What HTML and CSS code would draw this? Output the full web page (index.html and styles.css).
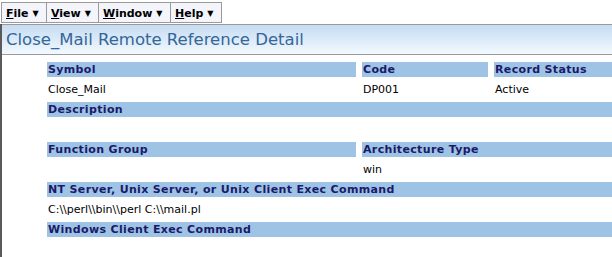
FILE: index.html
```html
<!DOCTYPE html>
<html lang="en">
<head>
    <meta charset="UTF-8">
    <title>Close_Mail Remote Reference Detail</title>
    <link rel="stylesheet" href="styles.css">
</head>
<body>
    <div class="menubar">
        <span class="menu menu-file"><span><u>F</u>ile</span><span class="arrow">&#9660;</span></span>
        <span class="menu menu-view"><span><u>V</u>iew</span><span class="arrow">&#9660;</span></span>
        <span class="menu menu-window"><span><u>W</u>indow</span><span class="arrow">&#9660;</span></span>
        <span class="menu menu-help"><span><u>H</u>elp</span><span class="arrow">&#9660;</span></span>
    </div>
    <div class="page">
        <h1 class="title">Close_Mail Remote Reference Detail</h1>
        <div class="detail">
            <div class="hd">Symbol</div>
            <div class="hd">Code</div>
            <div class="hd">Record Status</div>
            <div class="val">Close_Mail</div>
            <div class="val">DP001</div>
            <div class="val">Active</div>

            <div class="hd span3">Description</div>
            <div class="val span3"></div>

            <div class="hd">Function Group</div>
            <div class="hd span2">Architecture Type</div>
            <div class="val"></div>
            <div class="val span2">win</div>

            <div class="hd span3">NT Server, Unix Server, or Unix Client Exec Command</div>
            <div class="val span3">C:\\perl\\bin\\perl C:\\mail.pl</div>

            <div class="hd span3">Windows Client Exec Command</div>
            <div class="val span3"></div>
        </div>
    </div>
</body>
</html>
```

FILE: styles.css
```css
body {
    margin: 0;
    font-family: "DejaVu Sans", Verdana, sans-serif;
    font-size: 11px;
    background: #fff;
    color: #000;
}
.menubar {
    display: flex;
    padding: 2px 0 0 1px;
    height: 21px;
}
.menu {
    box-sizing: border-box;
    display: flex;
    align-items: center;
    gap: 4px;
    padding: 2px 0 0 4px;
    background: #f3f5fa;
    border: 1px solid #9a9a9a;
    border-left: none;
    font-weight: bold;
    color: #000;
}
.menu-file {
    width: 46px;
    border-left: 1px solid #9a9a9a;
}
.menu-view {
    width: 52px;
}
.menu-window {
    width: 72px;
}
.menu-help {
    width: 51px;
}
.arrow {
    font-size: 8px;
}
.page {
    margin-top: 1px;
    border-left: 2px solid #5a5a5a;
    min-height: 240px;
}
.title {
    margin: 0;
    height: 29px;
    line-height: 29px;
    padding-left: 4px;
    font-size: 16.5px;
    font-weight: normal;
    color: #336699;
    border-top: 1px solid #9a9a9a;
    border-bottom: 1px solid #9a9a9a;
    background: linear-gradient(#c6dcf2, #f2f9ff);
}
.detail {
    display: grid;
    grid-template-columns: 309px 126px 1fr;
    column-gap: 6px;
    margin: 7px 0 0 45px;
}
.hd {
    height: 15px;
    line-height: 15px;
    padding-left: 1px;
    background: #9ec3e4;
    color: #1a1a6a;
    font-weight: bold;
    letter-spacing: 0.35px;
    white-space: nowrap;
}
.val {
    height: 25px;
    line-height: 25px;
    padding-left: 1px;
}
.span2 {
    grid-column: span 2;
}
.span3 {
    grid-column: span 3;
}
```
